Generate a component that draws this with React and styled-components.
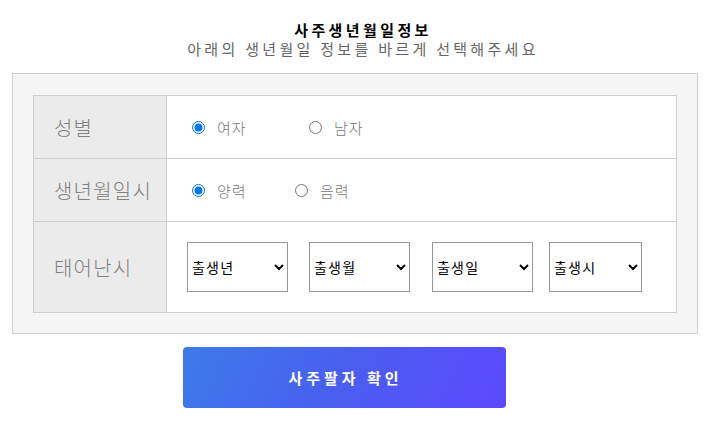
import React from "react";
import styled, { createGlobalStyle } from "styled-components";

const Global = createGlobalStyle`
  html, body { margin: 0; padding: 0; background: #fff; }
  body { font-family: "Noto Sans CJK KR", "Noto Sans", sans-serif; }
`;

const Page = styled.div`
  width: 712px;
  padding-top: 20px;
  display: flex;
  flex-direction: column;
  align-items: flex-start;
`;

const Heading = styled.header`
  align-self: stretch;
  display: flex;
  flex-direction: column;
  align-items: center;
  padding-left: 14px;
`;

const Title = styled.h1`
  margin: 0;
  font-size: 15px;
  font-weight: 700;
  letter-spacing: 3.4px;
  line-height: 20px;
  color: #000;
`;

const Subtitle = styled.p`
  margin: 0;
  font-size: 15px;
  font-weight: 400;
  letter-spacing: 3.3px;
  line-height: 17px;
  color: #666;
`;

const Panel = styled.div`
  box-sizing: border-box;
  width: 686px;
  margin: 16px 0 0 12px;
  background: #f5f5f5;
  border: 1px solid #cfcfcf;
  padding: 21px 20px 20px 20px;
`;

const Table = styled.div`
  display: grid;
  grid-template-columns: 133px 1fr;
  grid-template-rows: 63px 63px 91px;
  border: 1px solid #cfcfcf;
  border-bottom: none;
  background: #fff;
`;

const Label = styled.div`
  background: #ebebeb;
  border-right: 1px solid #cfcfcf;
  border-bottom: 1px solid #cfcfcf;
  display: flex;
  align-items: center;
  padding-left: 20px;
  font-size: 20px;
  font-weight: 300;
  color: #808080;
  letter-spacing: 1.2px;
`;

const Cell = styled.div`
  border-bottom: 1px solid #cfcfcf;
  display: flex;
  align-items: center;
  padding-left: ${(p) => p.$pad || 24}px;
`;

const RadioLabel = styled.label`
  display: inline-flex;
  align-items: center;
  width: ${(p) => p.$w}px;
  font-size: 15px;
  font-weight: 300;
  color: #777;
  letter-spacing: 1px;
  input {
    margin: 0 12px 0 0;
    width: 13px;
    height: 13px;
  }
`;

const Select = styled.select`
  box-sizing: border-box;
  width: ${(p) => p.$w}px;
  height: 50px;
  margin-right: ${(p) => p.$mr || 0}px;
  border: 1px solid #999;
  border-radius: 0;
  background: #fff;
  font-family: "Noto Sans CJK KR", sans-serif;
  font-size: 14px;
  letter-spacing: 1.2px;
  color: #000;
  padding: 0;
`;

const Button = styled.button`
  margin: 13px 0 0 183px;
  width: 323px;
  height: 61px;
  border: none;
  border-radius: 4px;
  background: linear-gradient(115deg, #3c7be9 0%, #4a5ef0 50%, #5b49fd 100%);
  color: #fff;
  font-family: "Noto Sans CJK KR", sans-serif;
  font-size: 15px;
  font-weight: 700;
  letter-spacing: 4px;
  padding: 0 0 0 2px;
`;

export default function App() {
  return (
    <Page>
      <Global />
      <Heading>
        <Title>사주생년월일정보</Title>
        <Subtitle>아래의 생년월일 정보를 바르게 선택해주세요</Subtitle>
      </Heading>
      <Panel>
        <Table>
          <Label>성별</Label>
          <Cell $pad={25}>
            <RadioLabel $w={117}>
              <input type="radio" name="g" defaultChecked />
              여자
            </RadioLabel>
            <RadioLabel $w={80}>
              <input type="radio" name="g" />
              남자
            </RadioLabel>
          </Cell>
          <Label>생년월일시</Label>
          <Cell $pad={25}>
            <RadioLabel $w={103}>
              <input type="radio" name="c" defaultChecked />
              양력
            </RadioLabel>
            <RadioLabel $w={80}>
              <input type="radio" name="c" />
              음력
            </RadioLabel>
          </Cell>
          <Label>태어난시</Label>
          <Cell $pad={20}>
            <Select $w={101} $mr={21}><option>출생년</option></Select>
            <Select $w={101} $mr={22}><option>출생월</option></Select>
            <Select $w={101} $mr={16}><option>출생일</option></Select>
            <Select $w={93}><option>출생시</option></Select>
          </Cell>
        </Table>
      </Panel>
      <Button>사주팔자 확인</Button>
    </Page>
  );
}
